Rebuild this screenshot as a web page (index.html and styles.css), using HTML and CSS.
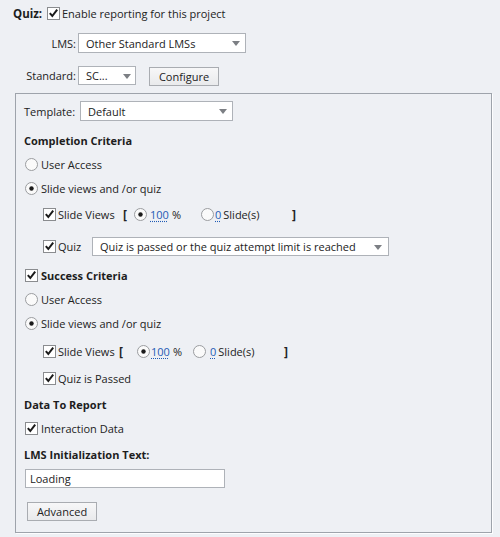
FILE: index.html
```html
<!DOCTYPE html>
<html>
<head>
<meta charset="utf-8">
<link rel="stylesheet" href="styles.css">
</head>
<body>
<div class="page">
  <div class="row r-quiz">
    <span class="quiz-lbl b">Quiz:</span>
    <svg class="cb" width="13" height="13" viewBox="0 0 13 13"><rect x="0.5" y="0.5" width="12" height="12" fill="#fff" stroke="#8a8c8f"/><path d="M2.8 6.2 L5.3 9 L10.2 2.6" fill="none" stroke="#1b1b1b" stroke-width="2"/></svg>
    <span class="cb-text">Enable reporting for this project</span>
  </div>

  <div class="row r-lms">
    <span class="rlabel">LMS:</span>
    <div class="select s-lms"><span>Other Standard LMSs</span><i class="arrow"></i></div>
  </div>

  <div class="row r-std">
    <span class="rlabel">Standard:</span>
    <div class="select s-std"><span>SC...</span><i class="arrow"></i></div>
    <div class="btn btn-config">Configure</div>
  </div>

  <div class="panel">
    <div class="row r-tpl">
      <span class="tpl-lbl">Template:</span>
      <div class="select s-tpl"><span>Default</span><i class="arrow"></i></div>
    </div>

    <div class="row r-head r-comp b">Completion Criteria</div>

    <div class="row r-opt">
      <svg class="rd" width="13" height="13" viewBox="0 0 13 13"><circle cx="6.5" cy="6.5" r="6" fill="#fafafa" stroke="#9a9c9f"/></svg>
      <span class="rd-text">User Access</span>
    </div>
    <div class="row r-opt">
      <svg class="rd" width="13" height="13" viewBox="0 0 13 13"><circle cx="6.5" cy="6.5" r="6" fill="#fafafa" stroke="#9a9c9f"/><circle cx="6.5" cy="6.5" r="2.2" fill="#1b1b1b"/></svg>
      <span class="rd-text">Slide views and /or quiz</span>
    </div>

    <div class="row r-sub r-sv1">
      <svg class="cb" width="13" height="13" viewBox="0 0 13 13"><rect x="0.5" y="0.5" width="12" height="12" fill="#fff" stroke="#8a8c8f"/><path d="M2.8 6.2 L5.3 9 L10.2 2.6" fill="none" stroke="#1b1b1b" stroke-width="2"/></svg>
      <span class="sv-text sv-text1">Slide Views</span>
      <span class="brk brk1">[</span>
      <svg class="rd" width="13" height="13" viewBox="0 0 13 13"><circle cx="6.5" cy="6.5" r="6" fill="#fafafa" stroke="#9a9c9f"/><circle cx="6.5" cy="6.5" r="2.2" fill="#1b1b1b"/></svg>
      <span class="grp grp-pct1"><span class="num">100</span><span class="pct">%</span></span>
      <svg class="rd" width="13" height="13" viewBox="0 0 13 13"><circle cx="6.5" cy="6.5" r="6" fill="#fafafa" stroke="#9a9c9f"/></svg>
      <span class="grp grp-zero1"><span class="num">0</span><span class="slides">Slide(s)</span></span>
      <span class="brk">]</span>
    </div>

    <div class="row r-sub r-quizsel">
      <svg class="cb" width="13" height="13" viewBox="0 0 13 13"><rect x="0.5" y="0.5" width="12" height="12" fill="#fff" stroke="#8a8c8f"/><path d="M2.8 6.2 L5.3 9 L10.2 2.6" fill="none" stroke="#1b1b1b" stroke-width="2"/></svg>
      <span class="quiz-text">Quiz</span>
      <div class="select s-quiz"><span>Quiz is passed  or the quiz attempt limit is reached</span><i class="arrow"></i></div>
    </div>

    <div class="row r-succ">
      <svg class="cb" width="13" height="13" viewBox="0 0 13 13"><rect x="0.5" y="0.5" width="12" height="12" fill="#fff" stroke="#8a8c8f"/><path d="M2.8 6.2 L5.3 9 L10.2 2.6" fill="none" stroke="#1b1b1b" stroke-width="2"/></svg>
      <span class="rd-text b succ-text">Success Criteria</span>
    </div>

    <div class="row r-opt">
      <svg class="rd" width="13" height="13" viewBox="0 0 13 13"><circle cx="6.5" cy="6.5" r="6" fill="#fafafa" stroke="#9a9c9f"/></svg>
      <span class="rd-text">User Access</span>
    </div>
    <div class="row r-opt">
      <svg class="rd" width="13" height="13" viewBox="0 0 13 13"><circle cx="6.5" cy="6.5" r="6" fill="#fafafa" stroke="#9a9c9f"/><circle cx="6.5" cy="6.5" r="2.2" fill="#1b1b1b"/></svg>
      <span class="rd-text">Slide views and /or quiz</span>
    </div>

    <div class="row r-sub r-sv2">
      <svg class="cb" width="13" height="13" viewBox="0 0 13 13"><rect x="0.5" y="0.5" width="12" height="12" fill="#fff" stroke="#8a8c8f"/><path d="M2.8 6.2 L5.3 9 L10.2 2.6" fill="none" stroke="#1b1b1b" stroke-width="2"/></svg>
      <span class="sv-text sv-text2">Slide Views</span>
      <span class="brk brk2">[</span>
      <svg class="rd" width="13" height="13" viewBox="0 0 13 13"><circle cx="6.5" cy="6.5" r="6" fill="#fafafa" stroke="#9a9c9f"/><circle cx="6.5" cy="6.5" r="2.2" fill="#1b1b1b"/></svg>
      <span class="grp grp-pct2"><span class="num">100</span><span class="pct">%</span></span>
      <svg class="rd" width="13" height="13" viewBox="0 0 13 13"><circle cx="6.5" cy="6.5" r="6" fill="#fafafa" stroke="#9a9c9f"/></svg>
      <span class="grp grp-zero2"><span class="num">0</span><span class="slides">Slide(s)</span></span>
      <span class="brk">]</span>
    </div>

    <div class="row r-sub r-passed">
      <svg class="cb" width="13" height="13" viewBox="0 0 13 13"><rect x="0.5" y="0.5" width="12" height="12" fill="#fff" stroke="#8a8c8f"/><path d="M2.8 6.2 L5.3 9 L10.2 2.6" fill="none" stroke="#1b1b1b" stroke-width="2"/></svg>
      <span class="cb-text">Quiz is Passed</span>
    </div>

    <div class="row r-head r-data b">Data To Report</div>

    <div class="row r-opt">
      <svg class="cb cb-data" width="13" height="13" viewBox="0 0 13 13"><rect x="0.5" y="0.5" width="12" height="12" fill="#fff" stroke="#8a8c8f"/><path d="M2.8 6.2 L5.3 9 L10.2 2.6" fill="none" stroke="#1b1b1b" stroke-width="2"/></svg>
      <span class="rd-text">Interaction Data</span>
    </div>

    <div class="row r-head r-init b">LMS Initialization Text:</div>

    <div class="input">Loading</div>

    <div class="btn btn-adv">Advanced</div>
  </div>
</div>
</body>
</html>
```

FILE: styles.css
```css
html, body {
  margin: 0;
  padding: 0;
  background: #eef0f4;
}

body {
  font-family: "Open Sans", "Noto Sans", "DejaVu Sans", sans-serif;
  font-size: 11px;
  color: #222;
  width: 500px;
  height: 537px;
  overflow: hidden;
}

.page {
  padding-top: 3px;
}

.b {
  font-weight: 700;
  color: #1d1d1d;
}

.row {
  display: flex;
  align-items: center;
  white-space: nowrap;
}

svg { display: block; flex: none; }

/* top area */
.r-quiz {
  height: 20px;
  padding-left: 13px;
}
.quiz-lbl { width: 34px; font-size: 11.5px; }
.cb-text { margin-left: 2px; }

.r-lms {
  margin-top: 10px;
  height: 20px;
}
.r-std {
  margin-top: 12px;
  height: 20px;
}
.rlabel {
  width: 76px;
  text-align: right;
}

.select {
  position: relative;
  box-sizing: border-box;
  background: #fff;
  border: 1px solid #aeb2b8;
  height: 20px;
  display: flex;
  align-items: center;
  padding-left: 7px;
  flex: none;
}
.arrow {
  position: absolute;
  right: 5px;
  top: 7px;
  width: 0;
  height: 0;
  border-left: 4px solid transparent;
  border-right: 4px solid transparent;
  border-top: 5px solid #7c7f84;
}
.s-lms { width: 168px; margin-left: 2px; }
.s-std { width: 58px; margin-left: 2px; height: 19px; }
.s-std .arrow { right: 4px; top: 7px; }

.btn {
  box-sizing: border-box;
  width: 70px;
  height: 19px;
  border: 1px solid #a9acb1;
  background: linear-gradient(#f7f7f8, #e9eaec);
  display: flex;
  align-items: center;
  justify-content: center;
  flex: none;
}
.btn-config { margin-left: 13px; height: 19px; margin-top: 2px; }

/* panel */
.panel {
  margin-top: 8px;
  margin-left: 15px;
  width: 477px;
  box-sizing: border-box;
  border: 1px solid #9ea3ab;
  box-shadow: 1px 1px 0 #fdfdfe;
  padding: 7px 0 11px 8px;
}

.r-tpl { height: 20px; }
.tpl-lbl { width: 56px; }
.s-tpl { width: 153px; height: 20px; }

.r-head { height: 24px; }
.r-comp { margin-top: 7px; }

.r-opt {
  height: 24px;
  padding-left: 1px;
}
.rd-text { margin-left: 3px; }

.r-sub {
  height: 24px;
  padding-left: 19px;
}
.r-sv1 { margin-top: 2px; }
.sv-text { margin-left: 2px; }
.sv-text1 { width: 65px; }
.sv-text2 { width: 61px; }

.brk { font-weight: 700; font-size: 12px; }
.brk1 { width: 11px; }
.brk2 { width: 18px; }

.grp {
  display: flex;
  align-items: center;
  flex: none;
}
.num {
  color: #1f5bb5;
  text-decoration: underline dotted #1f5bb5;
  text-underline-offset: 2px;
}
.pct { margin-left: 3px; }
.slides { margin-left: 2px; }

.grp-pct1 { margin-left: 3px; width: 51px; }
.grp-pct2 { margin-left: 1px; width: 42px; }
.grp-zero1 { margin-left: 1px; width: 77px; }
.grp-zero2 { margin-left: 4px; width: 74px; }

.r-quizsel {
  margin-top: 8px;
}
.quiz-text { margin-left: 2px; width: 34px; }
.s-quiz { width: 297px; height: 19px; }
.s-quiz .arrow { right: 6px; top: 7px; }

.r-succ {
  height: 24px;
  padding-left: 1px;
  margin-top: 5px;
}
.succ-text { margin-left: 3px; }

.r-sv2 { margin-top: 4px; }
.r-passed { margin-top: 3px; }
.r-data { margin-top: 2px; }
.r-init { margin-top: 2px; }

.input {
  box-sizing: border-box;
  margin-top: 3px;
  margin-left: 1px;
  width: 200px;
  height: 19px;
  background: #fff;
  border: 1px solid #aeb2b8;
  padding-left: 4px;
  display: flex;
  align-items: center;
}

.btn-adv {
  margin-top: 14px;
  margin-left: 3px;
}
```
